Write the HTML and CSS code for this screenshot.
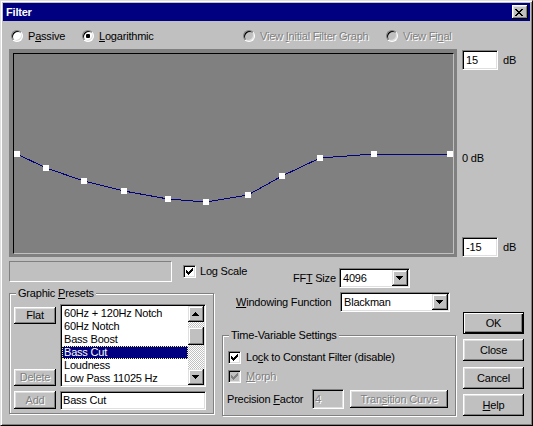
FILE: index.html
```html
<!DOCTYPE html>
<html>
<head>
<meta charset="utf-8">
<title>Filter</title>
<link rel="stylesheet" href="styles.css">
</head>
<body>
<div class="window">
  <div class="titlebar">
    <span class="title">Filter</span>
    <span class="close"><svg width="8" height="7" viewBox="0 0 8 7"><path d="M0 0h2v1h-2zM6 0h2v1h-2zM1 1h2v1h-2zM5 1h2v1h-2zM2 2h4v1h-4zM3 3h2v1h-2zM2 4h4v1h-4zM1 5h2v1h-2zM5 5h2v1h-2zM0 6h2v1h-2zM6 6h2v1h-2z" fill="#000"/></svg></span>
  </div>
  <div class="body">
    <div class="radios">
      <div class="radio r-passive"><span class="rb"></span><span>P<u>a</u>ssive</span></div>
      <div class="radio r-log"><span class="rb on"></span><span><u>L</u>ogarithmic</span></div>
      <div class="radio r-init disabled"><span class="rb"></span><span>View <u>I</u>nitial Filter Graph</span></div>
      <div class="radio disabled"><span class="rb"></span><span>View Fi<u>n</u>al</span></div>
    </div>

    <div class="graph-row">
      <div class="graph">
        <div class="plot">
          <svg width="439" height="199" viewBox="0 0 439 199">
            <polyline points="3,100 32,114 70,127 110,137 154,145 192,148 234,141 268,122 306,104 360,100 436,100" fill="none" stroke="#000080" stroke-width="1" shape-rendering="crispEdges"/>
            <g fill="#fff">
              <rect x="0" y="97" width="6" height="6"/>
              <rect x="29" y="111" width="6" height="6"/>
              <rect x="67" y="124" width="6" height="6"/>
              <rect x="107" y="134" width="6" height="6"/>
              <rect x="151" y="142" width="6" height="6"/>
              <rect x="189" y="145" width="6" height="6"/>
              <rect x="231" y="138" width="6" height="6"/>
              <rect x="265" y="119" width="6" height="6"/>
              <rect x="303" y="101" width="6" height="6"/>
              <rect x="357" y="97" width="6" height="6"/>
              <rect x="433" y="97" width="6" height="6"/>
            </g>
          </svg>
        </div>
      </div>
      <div class="scale">
        <div class="scale-row"><span class="field db-field">15</span><span>dB</span></div>
        <div class="zero">0 dB</div>
        <div class="scale-row bottom"><span class="field db-field">-15</span><span>dB</span></div>
      </div>
    </div>

    <div class="status-row">
      <div class="status"></div>
      <div class="check log"><span class="cb"><svg width="7" height="7" viewBox="0 0 7 7"><path d="M0 2h1v3h-1zM1 3h1v3h-1zM2 4h1v3h-1zM3 3h1v3h-1zM4 2h1v3h-1zM5 1h1v3h-1zM6 0h1v3h-1z" fill="#000"/></svg></span><span>Log Scale</span></div>
      <div class="fft-label">FF<u>T</u> Size</div>
      <div class="combo fft"><span class="combo-text">4096</span><span class="drop"><svg width="16" height="16" viewBox="0 0 16 16"><path d="M4 6h7v1h-1v1h-1v1h-1v1h-1v-1h-1v-1h-1v-1h-1z" fill="#000"/></svg></span></div>
    </div>

    <div class="lower">
      <fieldset class="group presets">
        <legend><span>Graphic <u>P</u>resets</span></legend>
        <div class="presets-grid">
          <div class="btn-col">
            <div class="btn small flat">Flat</div>
            <div class="btn small disabled del">Delete</div>
          </div>
          <div class="listbox">
            <ul class="items">
              <li>60Hz + 120Hz Notch</li>
              <li>60Hz Notch</li>
              <li>Bass Boost</li>
              <li class="sel">Bass Cut</li>
              <li>Loudness</li>
              <li>Low Pass 11025 Hz</li>
            </ul>
            <div class="vscroll">
              <div class="sb-btn"><svg width="16" height="16" viewBox="0 0 16 16"><path d="M7 6h1v1h1v1h1v1h1v1h-7v-1h1v-1h1v-1h1z" fill="#000"/></svg></div>
              <div class="sb-track"><div class="sb-thumb"></div></div>
              <div class="sb-btn"><svg width="16" height="16" viewBox="0 0 16 16"><path d="M4 6h7v1h-1v1h-1v1h-1v1h-1v-1h-1v-1h-1v-1h-1z" fill="#000"/></svg></div>
            </div>
          </div>
          <div class="btn small disabled add">Add</div>
          <div class="field name-field">Bass Cut</div>
        </div>
      </fieldset>

      <div class="middle">
        <div class="wf-row">
          <div class="wf-label"><u>W</u>indowing Function</div>
          <div class="combo wf"><span class="combo-text">Blackman</span><span class="drop"><svg width="16" height="16" viewBox="0 0 16 16"><path d="M4 6h7v1h-1v1h-1v1h-1v1h-1v-1h-1v-1h-1v-1h-1z" fill="#000"/></svg></span></div>
        </div>
        <fieldset class="group timevar">
          <legend><span>Time-Variable Settings</span></legend>
          <div class="check row-lock"><span class="cb"><svg width="7" height="7" viewBox="0 0 7 7"><path d="M0 2h1v3h-1zM1 3h1v3h-1zM2 4h1v3h-1zM3 3h1v3h-1zM4 2h1v3h-1zM5 1h1v3h-1zM6 0h1v3h-1z" fill="#000"/></svg></span><span>Lo<u>c</u>k to Constant Filter (disable)</span></div>
          <div class="check row-morph disabled"><span class="cb"><svg width="7" height="7" viewBox="0 0 7 7"><path d="M0 2h1v3h-1zM1 3h1v3h-1zM2 4h1v3h-1zM3 3h1v3h-1zM4 2h1v3h-1zM5 1h1v3h-1zM6 0h1v3h-1z" fill="#808080"/></svg></span><span><u>M</u>orph</span></div>
          <div class="precision-row">
            <span class="prec-label">Precision <u>F</u>actor</span>
            <span class="field prec-field disabled">4</span>
            <span class="btn trans disabled">Tran<u>s</u>ition Curve</span>
          </div>
        </fieldset>
      </div>

      <div class="buttons">
        <div class="btn big default">OK</div>
        <div class="btn big b-close">Close</div>
        <div class="btn big b-cancel">Cancel</div>
        <div class="btn big b-help"><span><u>H</u>elp</span></div>
      </div>
    </div>
  </div>
</div>
</body>
</html>
```

FILE: styles.css
```css
* { box-sizing: border-box; }
html, body { margin: 0; padding: 0; }
body {
  font-family: "Liberation Sans", Arial, sans-serif;
  font-size: 11px;
  letter-spacing: -0.2px;
  line-height: 13px;
  color: #000;
  background: #c0c0c0;
}
u { text-decoration: underline; text-underline-offset: 1px; }

.window {
  width: 533px;
  height: 426px;
  background: #c0c0c0;
  border: 1px solid;
  border-color: #dfdfdf #000 #000 #dfdfdf;
  box-shadow: inset 1px 1px #fff, inset -1px -1px #808080;
  padding: 2px;
}

.titlebar {
  height: 18px;
  background: #000080;
  color: #fff;
  display: flex;
  align-items: center;
  padding: 0 2px 0 3px;
}
.title { font-weight: bold; }
.close {
  margin-left: auto;
  width: 16px;
  height: 14px;
  background: #c0c0c0;
  box-shadow: inset -1px -1px #000, inset 1px 1px #fff, inset -2px -2px #808080, inset 2px 2px #dfdfdf;
  display: flex;
  align-items: flex-start;
  padding: 4px 0 0 3px;
}
.close svg { display: block; }

.body { padding: 0 6px; }

/* radios */
.radios {
  margin-top: 9px;
  height: 12px;
  display: flex;
  align-items: center;
}
.radio { display: flex; align-items: center; gap: 5px; flex: none; }
.r-passive { margin-left: 2px; width: 71px; }
.r-log { width: 161px; }
.r-init { width: 143px; }
.rb {
  width: 12px;
  height: 12px;
  border-radius: 50%;
  border: 1px solid;
  border-color: #808080 #fff #fff #808080;
  box-shadow: inset 1px 1px #000, inset -1px -1px #dfdfdf;
  background: #fff;
  display: flex;
  align-items: center;
  justify-content: center;
  flex: none;
}
.rb.on::after {
  content: "";
  width: 4px;
  height: 4px;
  background: #000;
  border-radius: 1px;
}
.disabled { color: #808080; text-shadow: 1px 1px #fff; }
.radio.disabled .rb { background: #c0c0c0; }

/* graph */
.graph-row { margin-top: 7px; display: flex; }
.graph {
  width: 448px;
  height: 208px;
  background: #808080;
  padding: 4px 3px 3px 4px;
  flex: none;
}
.plot {
  height: 100%;
  border: 1px solid;
  border-color: #000 #c0c0c0 #c0c0c0 #000;
}
.plot svg { display: block; }

.scale {
  margin-left: 5px;
  height: 208px;
  padding-top: 1px;
  display: flex;
  flex-direction: column;
}
.scale-row { display: flex; align-items: center; gap: 5px; }
.scale-row.bottom { margin-top: auto; }
.zero { margin-top: 82px; }

.field {
  display: block;
  background: #fff;
  border: 1px solid;
  border-color: #808080 #fff #fff #808080;
  box-shadow: inset 1px 1px #000, inset -1px -1px #dfdfdf;
  padding: 0 0 0 3px;
}
.db-field { width: 36px; height: 20px; line-height: 18px; }

/* status row */
.status-row {
  margin-top: 4px;
  height: 26px;
  display: flex;
  align-items: flex-start;
}
.status {
  width: 163px;
  height: 21px;
  border: 1px solid;
  border-color: #808080 #fff #fff #808080;
  flex: none;
}
.check { display: flex; align-items: center; gap: 4px; }
.log { margin-left: 11px; margin-top: 4px; width: 110px; flex: none; }
.cb {
  width: 13px;
  height: 13px;
  background: #fff;
  border: 1px solid;
  border-color: #808080 #fff #fff #808080;
  box-shadow: inset 1px 1px #000, inset -1px -1px #dfdfdf;
  display: flex;
  align-items: center;
  justify-content: center;
  flex: none;
}
.cb svg { display: block; }
.check.disabled .cb { background: #c0c0c0; }

.fft-label {
  width: 46px;
  margin-top: 7px;
  line-height: 20px;
  text-align: right;
  padding-right: 4px;
  flex: none;
  white-space: nowrap;
}
.combo {
  display: flex;
  height: 20px;
  background: #fff;
  border: 1px solid;
  border-color: #808080 #fff #fff #808080;
  box-shadow: inset 1px 1px #000, inset -1px -1px #dfdfdf;
  padding: 1px;
  flex: none;
}
.combo-text { flex: 1; padding-left: 2px; line-height: 16px; }
.drop {
  width: 16px;
  height: 16px;
  background: #c0c0c0;
  box-shadow: inset -1px -1px #000, inset 1px 1px #dfdfdf, inset -2px -2px #808080, inset 2px 2px #fff;
}
.drop svg, .sb-btn svg { display: block; }
.combo.fft { margin-top: 7px; width: 71px; }

/* lower area */
.lower { display: flex; align-items: flex-start; }

.group {
  margin: 0;
  min-width: 0;
  border: 1px solid #808080;
  box-shadow: inset 1px 1px #fff, 1px 1px #fff;
}
.group legend {
  padding: 0 2px;
  line-height: 13px;
  background: #c0c0c0;
}

.presets {
  width: 205px;
  padding: 4px 7px 3px 4px;
  flex: none;
}
.presets legend { margin-left: 2px; }
.presets-grid {
  display: grid;
  grid-template-columns: 42px 146px;
  grid-template-rows: 83px 19px;
  column-gap: 4px;
  row-gap: 4px;
}
.btn-col { display: flex; flex-direction: column; }

.btn {
  background: #c0c0c0;
  box-shadow: inset -1px -1px #000, inset 1px 1px #fff, inset -2px -2px #808080, inset 2px 2px #dfdfdf;
  display: flex;
  align-items: center;
  justify-content: center;
  white-space: nowrap;
}
.btn.small { height: 17px; }
.flat { margin-top: 3px; }
.del { margin-top: auto; margin-bottom: 1px; }
.btn.add { height: 18px; }

.listbox {
  width: 146px;
  height: 83px;
  background: #fff;
  border: 1px solid;
  border-color: #808080 #fff #fff #808080;
  box-shadow: inset 1px 1px #000, inset -1px -1px #dfdfdf;
  padding: 1px;
  display: flex;
  overflow: hidden;
}
.items {
  list-style: none;
  margin: 0;
  padding: 1px 0 0 0;
  flex: 1;
  overflow: hidden;
  background: #fff;
}
.items li {
  height: 13px;
  line-height: 13px;
  padding-left: 2px;
  white-space: nowrap;
}
.items li.sel {
  background: #000080;
  color: #fff;
  outline: 1px dotted #ffff80;
  outline-offset: -1px;
}
.vscroll { width: 16px; display: flex; flex-direction: column; flex: none; }
.sb-btn {
  width: 16px;
  height: 16px;
  background: #c0c0c0;
  box-shadow: inset -1px -1px #000, inset 1px 1px #dfdfdf, inset -2px -2px #808080, inset 2px 2px #fff;
  flex: none;
}
.sb-track {
  flex: 1;
  background: repeating-conic-gradient(#fff 0 25%, #c0c0c0 0 50%) 0 0 / 2px 2px;
  padding-top: 5px;
}
.sb-thumb {
  height: 18px;
  background: #c0c0c0;
  box-shadow: inset -1px -1px #000, inset 1px 1px #dfdfdf, inset -2px -2px #808080, inset 2px 2px #fff;
}
.name-field { width: 146px; height: 19px; line-height: 17px; padding-left: 2px; }

.middle { margin-left: 8px; width: 234px; flex: none; }
.wf-row { margin-top: 5px; height: 20px; display: flex; }
.wf-label { width: 118px; padding-left: 14px; line-height: 20px; white-space: nowrap; flex: none; }
.combo.wf { width: 110px; }

.timevar {
  margin-top: 17px;
  width: 234px;
  padding: 9px 6px 6px 5px;
}
.timevar legend { margin-left: 1px; }
.check { gap: 5px; height: 13px; }
.log.check { gap: 4px; }
.row-morph { margin-top: 6px; }
.precision-row {
  margin-top: 6px;
  margin-left: -1px;
  display: flex;
  align-items: center;
  height: 20px;
}
.prec-label { width: 85px; flex: none; white-space: nowrap; }
.prec-field { width: 32px; height: 20px; line-height: 18px; background: #c0c0c0; padding-left: 2px; }
.btn.trans { margin-left: 6px; width: 98px; height: 18px; }

.buttons { margin-left: 7px; margin-top: 25px; width: 61px; flex: none; }
.btn.big { height: 22px; width: 61px; }
.btn.default {
  box-shadow: inset 0 0 0 1px #000, inset 2px 2px #fff, inset -2px -2px #000, inset -3px -3px #808080;
}
.b-close { margin-top: 5px; }
.b-cancel { margin-top: 6px; }
.b-help { margin-top: 5px; }
```
